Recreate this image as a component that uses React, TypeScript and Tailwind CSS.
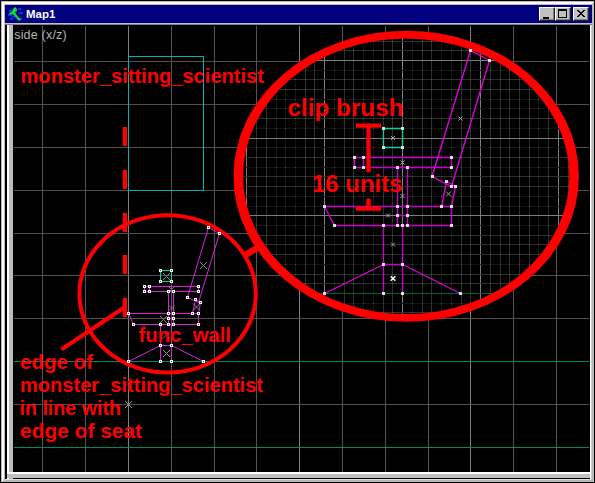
import React from "react";

type Pt = [number, number];

const COLS = [42, 85, 128, 171, 214, 256, 299, 342, 385, 428, 470, 513, 556];
const ROWS = [61, 104, 147, 190, 233, 275, 318, 361, 404, 447];

const cells = (from: number, to: number) =>
  Array.from({ length: to - from + 1 }, (_, i) => i + from);

const FINE_X = cells(-9, 26).map((n) => ({ n, p: Math.round(324.2 + n * 9.74) }));
const FINE_Y = cells(-18, 12).map((n) => ({ n, p: Math.round(215.3 + n * 9.71) }));
const DOTTED_X = [1, 4, 5, 22, -4, -5, -3, 9, 12, 13];
const DOTTED_Y = [-15, -12, -11, -9, -7, -5, -2, -1, 1, 5, 9, 8];

function fineColor(n: number, dotted: number[]) {
  if (n % 8 === 0) return "#7c7c7c";
  return dotted.includes(n) ? "#101610" : "#2a322a";
}

const BIG_NODES: Pt[] = [
  [470, 50], [489, 60], [432, 176], [451, 186], [446, 181], [455, 186],
  [441, 206], [451, 206], [451, 157], [451, 167], [354, 157], [363, 157],
  [354, 167], [363, 167], [397, 167], [407, 167], [397, 206], [407, 206],
  [397, 215], [407, 215], [397, 225], [407, 225], [324, 206], [334, 225],
  [383, 225], [402, 225], [451, 225], [383, 264], [402, 264], [383, 293],
  [402, 293], [324, 293], [460, 293], [383, 128], [402, 128], [383, 147],
  [402, 147],
];
const SMALL_NODES: Pt[] = [
  [208, 227], [219, 233], [187, 297], [195, 299], [200, 302], [192, 313],
  [198, 313], [198, 324], [198, 286], [198, 291], [144, 286], [149, 286],
  [144, 291], [149, 291], [168, 291], [173, 291], [168, 313], [173, 313],
  [168, 318], [173, 318], [168, 324], [173, 324], [128, 313], [133, 324],
  [160, 324], [160, 345], [171, 345], [160, 361], [171, 361], [128, 361],
  [203, 361], [160, 270], [171, 270], [160, 281], [171, 281],
];

function Cross({ x, y, r, c }: { x: number; y: number; r: number; c: string }) {
  return (
    <path
      d={`M${x - r} ${y - r}L${x + r} ${y + r}M${x + r} ${y - r}L${x - r} ${y + r}`}
      stroke={c}
      fill="none"
    />
  );
}

function Label({ x, y, w, size, children }: { x: number; y: number; w: number; size: number; children: string }) {
  return (
    <text x={x} y={y} fontSize={size} textLength={w} lengthAdjust="spacingAndGlyphs" fontWeight="bold" fill="#f00">
      {children}
    </text>
  );
}

function MapView() {
  return (
    <svg
      className="block h-full w-full font-['Liberation_Sans',Arial,sans-serif]"
      viewBox="13 25 576 447"
    >
      <defs>
        <clipPath id="lens">
          <ellipse cx="406.3" cy="176.3" rx="166" ry="140" />
        </clipPath>
      </defs>

      <g shapeRendering="crispEdges">
        {COLS.map((x) => (
          <rect key={x} x={x} y="26" width="1" height="446" fill={[128, 299, 470].includes(x) ? "#808080" : "#545454"} />
        ))}
        {ROWS.map((y) => (
          <rect key={y} x="14" y={y} width="575" height="1" fill={y === 361 || y === 447 ? "#008a60" : "#505050"} />
        ))}
        <rect x="128.5" y="56.5" width="75" height="134" fill="none" stroke="#00b4b4" />
      </g>

      <g clipPath="url(#lens)">
        <rect x="233" y="30" width="347" height="293" fill="#000" />
        <g shapeRendering="crispEdges">
          {FINE_X.map(({ n, p }) => (
            <rect key={n} x={p} y="30" width="1" height="293" fill={fineColor(n, DOTTED_X)} />
          ))}
          {FINE_Y.map(({ n, p }) => (
            <rect key={n} x="233" y={p} width="347" height="1" fill={fineColor(n, DOTTED_Y)} />
          ))}
          {FINE_X.filter((c) => c.n % 8 !== 0).map((c) =>
            FINE_Y.filter((r) => r.n % 8 !== 0).map((r) => (
              <rect key={`${c.n},${r.n}`} x={c.p} y={r.p} width="1" height="1" fill="#4c524c" />
            )),
          )}
          <rect x="233" y="293" width="347" height="1" fill="#006238" />
        </g>
      </g>

      {/* enlarged chair */}
      <g fill="none" stroke="#cc00cc" strokeWidth="1.35">
        <path d="M354.5 157.5H451.5V167.5H354.5ZM363.5 157.5V167.5M397.5 167.5V225.5M407.5 167.5V225.5M397.5 215.5H407.5M324.5 206.5H451.5V225.5H334.5ZM383.5 225.5V293.5M402.5 225.5V293.5M383.5 264.5H402.5" />
        <path d="M432 176.5L470.5 50.5L489.5 60.5L451.5 186.5ZM441.5 206.5L446.5 181.5L455.5 186.5L451.5 206.5M383.5 264.5L324.5 293.5M402.5 264.5L460.5 293.5" stroke="#e000e0" />
        <path d="M383.5 128.5H402.5V147.5H383.5Z" stroke="#00d89c" />
      </g>
      <Cross x={393} y={138} r={2} c="#aaa" />
      <Cross x={402.5} y={162.5} r={2} c="#aaa" />
      <Cross x={402.5} y={196} r={2} c="#aaa" />
      <Cross x={388} y={215.5} r={2} c="#aaa" />
      <Cross x={393} y={244.5} r={2} c="#999" />
      <g strokeWidth="1.5">
        <Cross x={393} y={278.5} r={2.3} c="#fff" />
      </g>
      <Cross x={460.5} y={118.5} r={2} c="#aaa" />
      <Cross x={448.5} y={194} r={2.4} c="#999" />

      {/* chair at map scale */}
      <g fill="none" stroke="#dc20dc">
        <path d="M144.5 286.5H198.5V291.5H144.5ZM149.5 286.5V291.5M168.5 291.5V324.5M173.5 291.5V324.5M168.5 318.5H173.5M128.5 313.5H198.5V324.5H133.5ZM160.5 324.5V361.5M171.5 324.5V361.5M160.5 345.5H171.5" />
        <path d="M187.5 297.5L208.5 227.5L219.5 233.5L198.5 302.5ZM192.5 313.5L195.5 299.5L200.5 302.5L198.5 313.5M160.5 345.5L128.5 361.5M171.5 345.5L203.5 361.5" />
        <path d="M160.5 270.5H171.5V281.5H160.5Z" stroke="#00d89c" />
      </g>
      <Cross x={203.5} y={265.5} r={3.5} c="#888" />
      <Cross x={196.5} y={307} r={3.5} c="#888" />
      <Cross x={166.5} y={276.5} r={3.5} c="#888" />
      <Cross x={171.5} y={289.5} r={3} c="#777" />
      <Cross x={171.5} y={308} r={3} c="#777" />
      <Cross x={163.5} y={319.5} r={3.5} c="#888" />
      <Cross x={166.5} y={335} r={3.5} c="#777" />
      <Cross x={166.5} y={353.5} r={3.5} c="#999" />
      <Cross x={128.5} y={404.5} r={3.5} c="#999" />

      {/* red annotations */}
      <ellipse cx="167.6" cy="293.9" rx="88.2" ry="78.7" fill="none" stroke="#f00" strokeWidth="4" />
      <path d="M245.5 255L260 246" stroke="#f00" strokeWidth="6.5" />
      <path
        fill="#f00"
        fillRule="evenodd"
        d="M233.5 176.3A172.7 145.5 0 0 1 578.9 176.3A172.7 145.5 0 0 1 233.5 176.3ZM243 176.3A163.2 137.8 0 0 0 569.4 176.3A163.2 137.8 0 0 0 243 176.3Z"
      />
      <path d="M63 348.5L125 307" stroke="#f00" strokeWidth="4.2" strokeLinecap="round" />

      <g shapeRendering="crispEdges">
        {BIG_NODES.map(([x, y]) => (
          <rect key={`${x},${y}`} x={x - 1} y={y - 1} width="3" height="3" fill="#ddd" />
        ))}
        {SMALL_NODES.map(([x, y]) => (
          <g key={`${x},${y}`}>
            <rect x={x - 1} y={y - 1} width="3" height="3" fill="#fff" />
            <rect x={x} y={y} width="1" height="1" fill="#504050" />
          </g>
        ))}
      </g>
      <g fill="#f00">
        {[127, 170, 213, 255, 298].map((y) => (
          <rect key={y} x="122.8" y={y} width="4.2" height="19" />
        ))}
        <rect x="356" y="123.5" width="25" height="4.2" />
        <rect x="366.4" y="124" width="4.2" height="48.3" />
        <rect x="366.4" y="198.5" width="4.2" height="9" />
        <rect x="356" y="206.5" width="25" height="4.2" />
      </g>
      <Label x={20.5} y={83} w={243.5} size={20}>monster_sitting_scientist</Label>
      <Label x={287.5} y={115.9} w={116} size={23.5}>clip brush</Label>
      <Label x={312} y={191.9} w={90.5} size={23.5}>16 units</Label>
      <Label x={138.5} y={342} w={92.5} size={19.5}>func_wall</Label>
      <Label x={20} y={368.9} w={73} size={20}>edge of</Label>
      <Label x={20} y={392} w={243} size={20}>monster_sitting_scientist</Label>
      <Label x={19.5} y={415} w={101.5} size={20}>in line with</Label>
      <Label x={20} y={438} w={122} size={20}>edge of seat</Label>
      <text x="14.2" y="39" fontSize="12.5" textLength="52.5" fill="#b4b4b4">side (x/z)</text>
    </svg>
  );
}

function CaptionButton({ children }: { children: React.ReactNode }) {
  return (
    <div className="h-[14px] w-4 border border-t-white border-r-[#202020] border-b-[#202020] border-l-white bg-[#c0c0c0]">
      <svg className="block" width="14" height="12" viewBox="0 0 14 12" shapeRendering="crispEdges">
        <path d="M13.5 0V11.5H0" stroke="#808080" fill="none" />
        {children}
      </svg>
    </div>
  );
}

export default function App() {
  return (
    <div className="flex h-[483px] w-[595px] flex-col overflow-hidden bg-black p-px font-['Liberation_Sans',Arial,sans-serif]">
      <div className="flex min-h-0 flex-1 flex-col border-t border-l border-[#c0b8bc]">
        <div className="flex min-h-0 flex-1 flex-col border-2 border-t-white border-r-[#b8b8b8] border-b-[#b8b8b8] border-l-white">
          <div className="flex min-h-0 flex-1 flex-col border-t border-l border-[#c0b8bc]">
            <div className="flex h-[18px] shrink-0 items-center bg-[#000080] pr-[3px] pl-[2px]">
              <svg width="18" height="17" viewBox="0 0 18 17" className="shrink-0">
                <path d="M2 4h3v2H2zM1 8h4v2H1zM3 12h3v2H3zM11 2h3v2h-3zM12 6h4v2h-4zM10 12h5v2h-5zM5 10h4v2H5z" fill="#1030e8" />
                <path d="M6 3L8 1L10 3V5L8 6L9 8L12 12L14 13L13 15L11 14L7 9L5 8L3 9L2 7L5 6Z" fill="#00e828" />
              </svg>
              <span className="ml-px text-[11.5px] leading-[17px] font-bold text-white">Map1</span>
              <div className="ml-auto flex">
                <CaptionButton>
                  <path d="M3 9h6v2H3z" fill="#000" />
                </CaptionButton>
                <CaptionButton>
                  <path d="M2 1h9v9H2zM3 3v6h7V3z" fill="#000" fillRule="evenodd" />
                </CaptionButton>
                <div className="w-[2px]" />
                <CaptionButton>
                  <path d="M3 2h2v1h1v1h2V3h1V2h2v1h-1v1H9v1H8v1h1v1h1v1h1v1H9V8H8V7H6v1H5v1H3V8h1V7h1V6h1V5H5V4H4V3H3z" fill="#000" />
                </CaptionButton>
              </div>
            </div>
            <div className="h-[2px] shrink-0 border-b border-[#808080] bg-[#c0c0c0]" />
            <div className="flex min-h-0 flex-1">
              <div className="w-[2px] shrink-0 bg-black" />
              <div className="w-[6px] shrink-0 border-l-2 border-white bg-[#bcbcbc]" />
              <div className="flex min-w-0 flex-1 flex-col">
                <div className="h-[447px] w-[576px] bg-black">
                  <MapView />
                </div>
                <div className="-ml-[6px] h-[6px] border-t-2 border-white bg-[#c0c0c0]" />
                <div className="h-px bg-black" />
                <div className="-ml-[8px] h-px bg-[#e0e0e0]" />
              </div>
              <div className="w-[2px] shrink-0 border-r border-[#d0d0d0] bg-white" />
            </div>
          </div>
        </div>
      </div>
    </div>
  );
}
